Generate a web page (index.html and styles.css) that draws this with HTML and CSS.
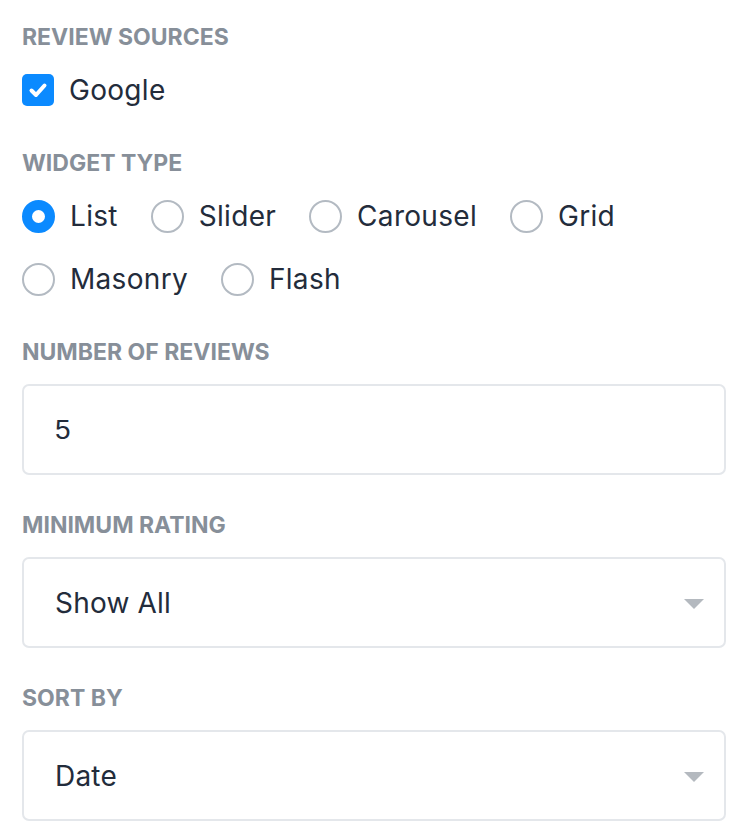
FILE: index.html
```html
<!DOCTYPE html>
<html lang="en">
<head>
    <meta charset="UTF-8">
    <meta name="viewport" content="width=device-width, initial-scale=1.0">
    <title>Widget Settings</title>
    <link rel="stylesheet" href="styles.css">
</head>
<body>

    <section class="settings">
        <!-- Review sources -->
        <div class="field">
            <div class="field-label">Review Sources</div>
            <div class="option-list">
                <label class="option">
                    <span class="checkbox checked">
                        <svg viewBox="0 0 32 32" width="32" height="32">
                            <polyline points="9.5,16.5 14,21 22.5,11.5" fill="none" stroke="#fff" stroke-width="4" stroke-linecap="round" stroke-linejoin="round"/>
                        </svg>
                    </span>
                    <span>Google</span>
                </label>
            </div>
        </div>

        <!-- Widget type -->
        <div class="field">
            <div class="field-label">Widget Type</div>
            <div class="option-list radio-group">
                <label class="option"><span class="radio checked"></span><span>List</span></label>
                <label class="option"><span class="radio"></span><span>Slider</span></label>
                <label class="option"><span class="radio"></span><span>Carousel</span></label>
                <label class="option"><span class="radio"></span><span>Grid</span></label>
                <label class="option"><span class="radio"></span><span>Masonry</span></label>
                <label class="option"><span class="radio"></span><span>Flash</span></label>
            </div>
        </div>

        <!-- Number of reviews -->
        <div class="field">
            <div class="field-label">Number of Reviews</div>
            <div class="text-input">5</div>
        </div>

        <!-- Minimum rating -->
        <div class="field">
            <div class="field-label">Minimum Rating</div>
            <div class="select">
                <span>Show All</span>
                <span class="select-arrow"></span>
            </div>
        </div>

        <!-- Sort by -->
        <div class="field">
            <div class="field-label">Sort By</div>
            <div class="select">
                <span>Date</span>
                <span class="select-arrow"></span>
            </div>
        </div>
    </section>

</body>
</html>
```

FILE: styles.css
```css
/* Global Styles */
body {
    font-family: Inter, "Noto Sans", sans-serif;
    margin: 0;
    padding: 0;
    background-color: #ffffff;
    color: #232c3b;
}

.settings {
    display: flex;
    flex-direction: column;
    gap: 37px;
    padding: 24px 26px 0 22px;
}

.field-label {
    font-size: 23px;
    line-height: 26px;
    font-weight: 700;
    text-transform: uppercase;
    color: #878f99;
    margin-bottom: 19px;
}

.option-list {
    padding-bottom: 2px;
}

.option {
    display: flex;
    align-items: center;
    gap: 15px;
    height: 42px;
    font-size: 28px;
    letter-spacing: 0.3px;
    cursor: pointer;
}

.checkbox {
    width: 32px;
    height: 32px;
    border-radius: 5px;
    background-color: #0b8aff;
    display: flex;
}

.radio-group {
    display: flex;
    flex-wrap: wrap;
    column-gap: 33px;
    row-gap: 21px;
}

.radio {
    width: 33px;
    height: 33px;
    box-sizing: border-box;
    border: 2px solid #b3bac2;
    border-radius: 50%;
    flex-shrink: 0;
}

.radio.checked {
    border: 10px solid #0b8aff;
    background-color: #ffffff;
}

.text-input,
.select {
    height: 91px;
    box-sizing: border-box;
    border: 2px solid #e4e7eb;
    border-radius: 7px;
    padding: 0 20px 0 31px;
    display: flex;
    align-items: center;
}

.text-input {
    font-family: "Liberation Sans", Arial, sans-serif;
    font-size: 28px;
}

.select {
    justify-content: space-between;
    font-size: 28px;
    letter-spacing: 0.2px;
}

.select-arrow {
    width: 0;
    height: 0;
    border-left: 10px solid transparent;
    border-right: 10px solid transparent;
    border-top: 10px solid #b4b9bf;
    margin-top: 2px;
}
```
